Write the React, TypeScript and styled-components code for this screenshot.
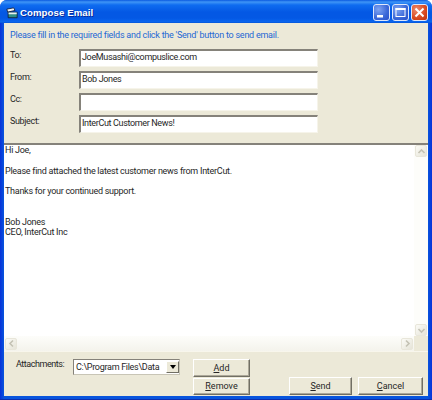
import React from 'react'
import styled, { createGlobalStyle } from 'styled-components'

const GlobalStyle = createGlobalStyle`
  html, body {
    margin: 0;
    padding: 0;
    background: #fff;
  }
`;

const Window = styled.div`
  width: 432px;
  height: 400px;
  box-sizing: border-box;
  display: flex;
  flex-direction: column;
  font-family: Roboto, "Liberation Sans", Arial, sans-serif;
  font-size: 9px;
  color: #262626;
  overflow: hidden;
  border-radius: 7px 7px 0 0;
  border-bottom: 1px solid #0a2fb0;
  background: linear-gradient(to right, #0831d9 0, #0855dd 4px, #0855dd 428px, #0831d9 100%);
`;

const TitleBar = styled.div`
  height: 23px;
  flex: none;
  display: flex;
  align-items: center;
  padding: 2px 4px 0 6px;
  box-sizing: border-box;
  background: linear-gradient(to bottom, #0a5ae0 0, #3f95f6 2px, #0f6cf0 5px, #0458e4 12px, #0458e4 18px, #0a66ee 22px, #0350d0 23px);
`;

const TitleIcon = styled.svg`
  width: 12px;
  height: 12px;
  flex: none;
  margin-right: 2px;
`;

const TitleText = styled.div`
  flex: 1;
  font-family: "Liberation Sans", Arial, sans-serif;
  font-size: 9.6px;
  font-weight: bold;
  color: #fff;
  letter-spacing: 0.1px;
  text-shadow: 1px 1px 0 #0a2a9a;
`;

const CaptionButton = styled.div<{ $close?: boolean }>`
  width: 17px;
  height: 17px;
  box-sizing: border-box;
  margin-left: 2px;
  border: 1px solid #dfe8fb;
  border-radius: 3px;
  display: flex;
  align-items: center;
  justify-content: center;
  background: ${p => p.$close
    ? 'radial-gradient(circle at 30% 30%, #ee8a6c, #d8491f 60%, #b83210)'
    : 'radial-gradient(circle at 30% 30%, #7fa4f2, #3a67d8 60%, #2a50c8)'};
`;

const Client = styled.div`
  flex: 1;
  min-height: 0;
  margin: 0 4px 3px;
  display: flex;
  flex-direction: column;
  background: #ece9d8;
`;

const Form = styled.div`
  height: 120px;
  flex: none;
  box-sizing: border-box;
  padding: 6px 0 0 6px;
`;

const Hint = styled.div`
  color: #2467d4;
  height: 20px;
  line-height: 13px;
  letter-spacing: -0.24px;
`;

const Fields = styled.div`
  display: grid;
  grid-template-columns: 69px 239px;
  grid-auto-rows: 18px;
  row-gap: 4px;
`;

const Label = styled.div`
  line-height: 13px;
  letter-spacing: -0.35px;
`;

const Input = styled.div`
  box-sizing: border-box;
  background: #fff;
  border-top: 2px solid #85827a;
  border-left: 2px solid #85827a;
  border-right: 1px solid #f6f4ea;
  border-bottom: 1px solid #f6f4ea;
  padding-left: 1px;
  line-height: 12px;
  letter-spacing: -0.35px;
  white-space: nowrap;
`;

const Body = styled.div`
  flex: 1;
  min-height: 0;
  display: grid;
  grid-template-columns: 1fr 14px;
  grid-template-rows: 1fr 15px;
  border-top: 2px solid #85827a;
  background: #fff;
`;

const Message = styled.div`
  padding-left: 1px;
  line-height: 10.25px;
  letter-spacing: -0.27px;
  white-space: pre;
`;

const VTrack = styled.div`
  display: flex;
  flex-direction: column;
  justify-content: space-between;
  background: #fdfdfa;
  padding: 0 1px;
`;

const HTrack = styled.div`
  display: flex;
  justify-content: space-between;
  align-items: center;
  padding: 0 1px;
  background: linear-gradient(to bottom, #fdfdfa, #f4f3ec);
`;

const Corner = styled.div`
  background: #ece9d8;
`;

const ScrollButton = styled.div`
  width: 12px;
  height: 12px;
  box-sizing: border-box;
  display: flex;
  align-items: center;
  justify-content: center;
  border: 1px solid #e8e6da;
  border-radius: 2px;
  background: linear-gradient(135deg, #fbfbf6, #e6e4d8);
`;

const Chevron = styled.svg`
  width: 9px;
  height: 9px;
`;

const Footer = styled.div`
  height: 45px;
  flex: none;
  box-sizing: border-box;
  padding: 7px 5px 1px 12px;
  display: flex;
  border-top: 1px solid #f8f6ec;
`;

const AttachLabel = styled.div`
  width: 57px;
  line-height: 11px;
  letter-spacing: -0.45px;
`;

const Combo = styled.div`
  width: 107px;
  height: 16px;
  flex: none;
  box-sizing: border-box;
  background: #fff;
  border-top: 1px solid #85827a;
  border-left: 1px solid #85827a;
  border-right: 1px solid #c8c5b6;
  border-bottom: 1px solid #c8c5b6;
  padding-left: 2px;
  display: flex;
  align-items: center;
  justify-content: space-between;
  letter-spacing: -0.3px;
  white-space: nowrap;
`;

const ComboButton = styled.div`
  width: 13px;
  height: 12px;
  flex: none;
  display: flex;
  align-items: center;
  justify-content: center;
  background: #ece9d8;
  border-top: 1px solid #fff;
  border-left: 1px solid #fff;
  border-right: 1px solid #716f64;
  border-bottom: 1px solid #716f64;
  box-sizing: border-box;
`;

const ArrowDown = styled.div`
  width: 0;
  height: 0;
  border-left: 3.5px solid transparent;
  border-right: 3.5px solid transparent;
  border-top: 4px solid #000;
`;

const AttachButtons = styled.div`
  width: 57px;
  flex: none;
  margin-left: 13px;
  display: flex;
  flex-direction: column;
  gap: 1px;
`;

const ActionButtons = styled.div`
  flex: 1;
  display: flex;
  justify-content: flex-end;
  align-items: flex-end;
  gap: 6px;
`;

const Button = styled.div<{ $w?: number }>`
  width: ${p => (p.$w ? `${p.$w}px` : '100%')};
  height: 18px;
  box-sizing: border-box;
  display: flex;
  align-items: center;
  justify-content: center;
  background: #ece9d8;
  border-top: 1px solid #fff;
  border-left: 1px solid #fff;
  border-right: 1px solid #716f64;
  border-bottom: 1px solid #716f64;
  box-shadow: inset -1px -1px 0 #aca899;
`;

const Key = styled.span`
  text-decoration: underline;
`;

const up = 'M1.5 6 L4.5 3 L7.5 6'
const down = 'M1.5 3 L4.5 6 L7.5 3'
const left = 'M6 1.5 L3 4.5 L6 7.5'
const right = 'M3 1.5 L6 4.5 L3 7.5'

const Arrow = ({ d }: { d: string }) => (
  <ScrollButton>
    <Chevron viewBox="0 0 9 9">
      <path d={d} fill="none" stroke="#c4c2b4" strokeWidth="1.6" />
    </Chevron>
  </ScrollButton>
)

const fields = [
  { label: 'To:', value: 'JoeMusashi@compuslice.com' },
  { label: 'From:', value: 'Bob Jones' },
  { label: 'Cc:', value: '' },
  { label: 'Subject:', value: 'InterCut Customer News!' },
]

const message = `Hi Joe,

Please find attached the latest customer news from InterCut.

Thanks for your continued support.


Bob Jones
CEO, InterCut Inc`

const App = () => {
  return (
    <Window>
      <GlobalStyle />
      <TitleBar>
        <TitleIcon viewBox="0 0 14 14">
          <path d="M1 2.5 L9 1 L10.5 4 L2 6 Z" fill="#f4f4f4" stroke="#10203a" strokeWidth="1" />
          <path d="M2.5 6 L13 6 L13 12.5 L2.5 12.5 Z" fill="#2f8f86" stroke="#10203a" strokeWidth="1" />
          <path d="M3 6.5 L12.5 6.5 L12.5 8.5 L3 8.5 Z" fill="#e8f0f0" />
        </TitleIcon>
        <TitleText>Compose Email</TitleText>
        <CaptionButton>
          <svg width="15" height="15" viewBox="0 0 15 15">
            <rect x="3" y="10" width="6" height="2.5" fill="#fff" />
          </svg>
        </CaptionButton>
        <CaptionButton>
          <svg width="15" height="15" viewBox="0 0 15 15">
            <rect x="3" y="3.5" width="9" height="8" fill="none" stroke="#fff" strokeWidth="1" />
            <rect x="2.5" y="3" width="10" height="2" fill="#fff" />
          </svg>
        </CaptionButton>
        <CaptionButton $close>
          <svg width="15" height="15" viewBox="0 0 15 15">
            <path d="M3.5 3.5 L11.5 11.5 M11.5 3.5 L3.5 11.5" stroke="#fff" strokeWidth="2" />
          </svg>
        </CaptionButton>
      </TitleBar>
      <Client>
        <Form>
          <Hint>Please fill in the required fields and click the 'Send' button to send email.</Hint>
          <Fields>
            {fields.map((field) => (
              <React.Fragment key={field.label}>
                <Label>{field.label}</Label>
                <Input>{field.value}</Input>
              </React.Fragment>
            ))}
          </Fields>
        </Form>
        <Body>
          <Message>{message}</Message>
          <VTrack>
            <Arrow d={up} />
            <Arrow d={down} />
          </VTrack>
          <HTrack>
            <Arrow d={left} />
            <Arrow d={right} />
          </HTrack>
          <Corner />
        </Body>
        <Footer>
          <AttachLabel>Attachments:</AttachLabel>
          <Combo>
            C:\Program Files\Data
            <ComboButton>
              <ArrowDown />
            </ComboButton>
          </Combo>
          <AttachButtons>
            <Button><span><Key>A</Key>dd</span></Button>
            <Button><span><Key>R</Key>emove</span></Button>
          </AttachButtons>
          <ActionButtons>
            <Button $w={63}><span><Key>S</Key>end</span></Button>
            <Button $w={65}><span><Key>C</Key>ancel</span></Button>
          </ActionButtons>
        </Footer>
      </Client>
    </Window>
  )
}

export default App
